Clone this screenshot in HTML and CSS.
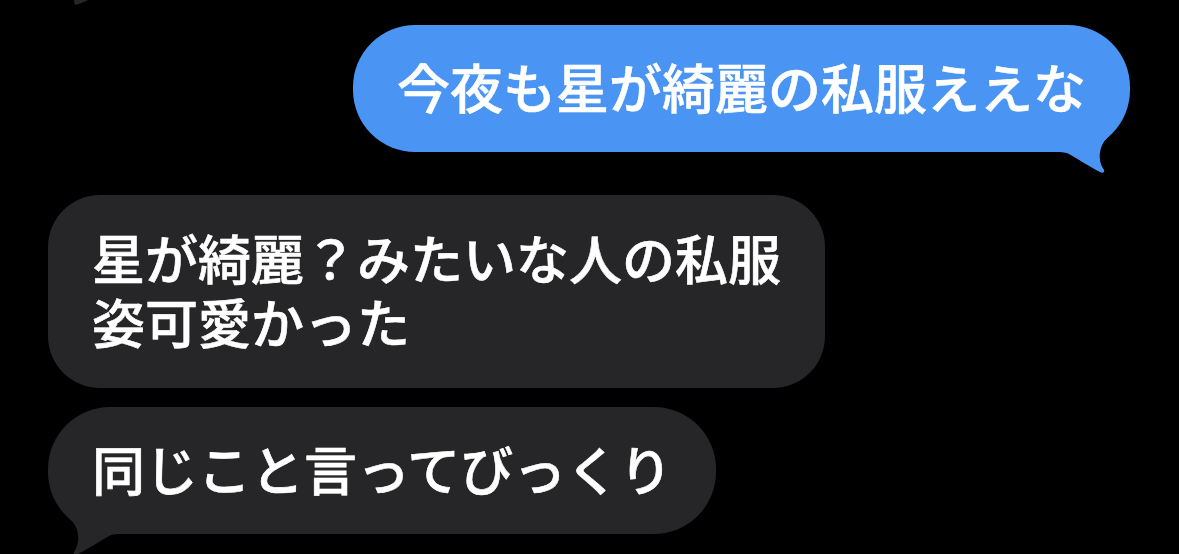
FILE: index.html
```html
<!DOCTYPE html>
<html>
  <head>
    <title>Messages</title>
    <meta name="viewport" content="width=device-width, initial-scale=1.0" />
    <link rel="stylesheet" href="styles.css">
  </head>
  <body>
    <div class="thread">
      <svg class="tail-stub" width="16" height="6" viewBox="0 0 16 6">
        <path d="M2,0 L16,0 C12,2 8,3.8 5,4.6 C3,5.1 2,4.2 2.3,2.6 Z" fill="#262628" />
      </svg>

      <div class="bubble sent">
        今夜も星が綺麗の私服ええな
        <svg class="tail" width="95" height="90" viewBox="0 0 95 90">
          <path d="M20,32 L20,62 L27,63 C38,69 50,77 60,82 C63,83.6 65,82 64,80 C57,70 59,56 67,48 C72,43 76,38 80,32 Z" />
        </svg>
      </div>

      <div class="bubble received multi">
        星が綺麗？みたいな人の私服<br>姿可愛かった
      </div>

      <div class="bubble received last">
        同じこと言ってびっくり
        <svg class="tail" width="95" height="90" viewBox="0 0 95 90">
          <path d="M20,32 L20,62 L27,63 C38,69 50,77 60,82 C63,83.6 65,82 64,80 C57,70 59,56 67,48 C72,43 76,38 80,32 Z" />
        </svg>
      </div>
    </div>
  </body>
</html>
```

FILE: styles.css
```css
body {
  margin: 0;
  background: black;
  color: white;
  font-family: "Noto Sans CJK JP", "Noto Sans", sans-serif;
}
.thread {
  display: flex;
  flex-direction: column;
  align-items: flex-start;
  height: 554px;
  overflow: hidden;
}
.tail-stub {
  display: block;
  margin-left: 72px;
}
.bubble {
  position: relative;
  padding: 29px 44px 34px;
  font-size: 53px;
  font-weight: 500;
  line-height: 64px;
  white-space: nowrap;
  border-radius: 62px;
  -webkit-text-stroke: 0.6px white;
}
.bubble .tail {
  position: absolute;
  right: -5px;
  bottom: -28px;
}
.sent {
  align-self: flex-end;
  margin-top: 19px;
  margin-right: 49px;
  background: #4a94f4;
}
.sent .tail path {
  fill: #4a94f4;
}
.received {
  margin-top: 43px;
  margin-left: 48px;
  background: #262628;
  border-radius: 52px;
}
.received.multi {
  padding-top: 30px;
  padding-bottom: 35px;
}
.received .tail path {
  fill: #262628;
}
.received.last {
  margin-top: 19px;
  border-radius: 62px;
}
.received .tail {
  right: auto;
  left: -5px;
  transform: scaleX(-1);
}
```
